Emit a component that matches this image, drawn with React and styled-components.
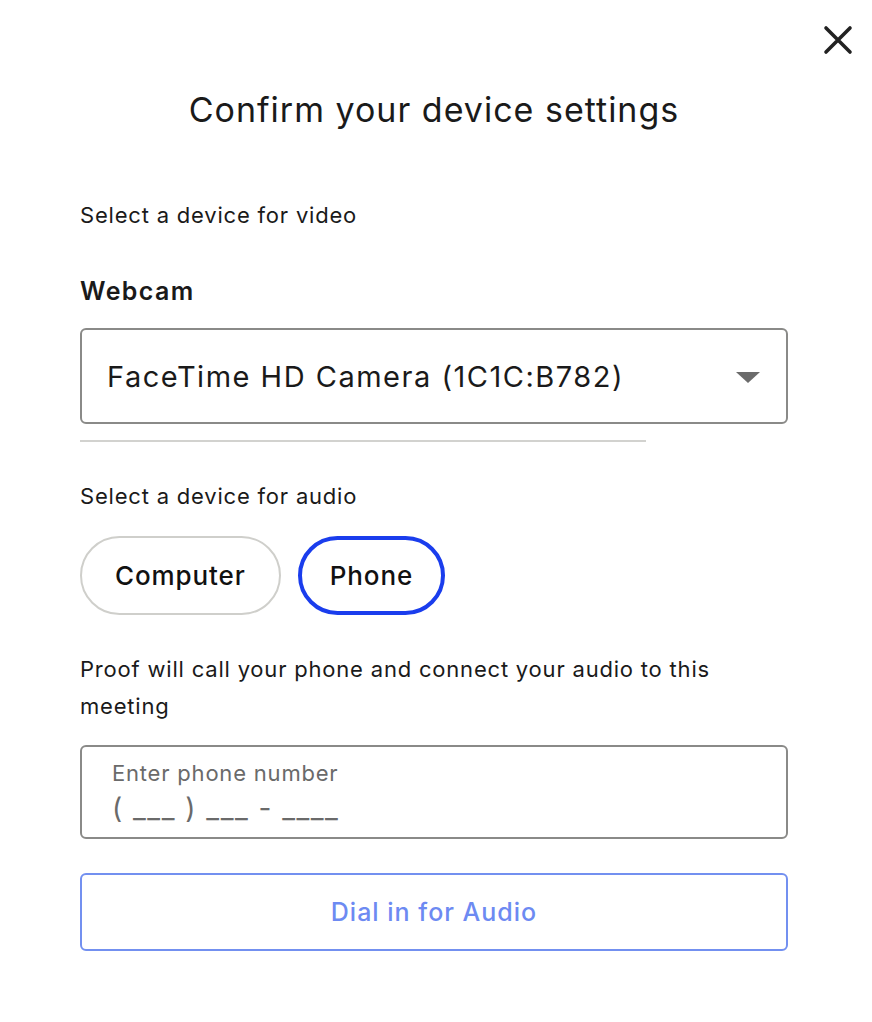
import React, { useState } from 'react';
import styled, { createGlobalStyle } from 'styled-components';

const GlobalStyle = createGlobalStyle`
  body {
    margin: 0;
    background: #fff;
    font-family: Inter, "Noto Sans", sans-serif;
    color: #1a1a1a;
  }
`;

const Modal = styled.div`
  position: relative;
  width: 872px;
  min-height: 1022px;
  box-sizing: border-box;
  padding: 88px 84px 0 80px;
`;

const CloseButton = styled.button`
  position: absolute;
  top: 22px;
  right: 16px;
  width: 36px;
  height: 36px;
  padding: 0;
  border: none;
  background: none;
  display: flex;
  align-items: center;
  justify-content: center;
  cursor: pointer;
`;

const Title = styled.h1`
  margin: 0;
  text-align: center;
  font-size: 34px;
  font-weight: 400;
  letter-spacing: 1px;
  line-height: 44px;
  color: #1a1a1a;
`;

const Hint = styled.p`
  margin: ${(p) => p.$top || 0}px 0 0;
  font-size: 22px;
  letter-spacing: 0.8px;
  line-height: 37px;
  color: #1a1a1a;
`;

const FieldLabel = styled.div`
  margin-top: 42px;
  font-size: 25px;
  font-weight: 600;
  letter-spacing: 1.4px;
  line-height: 30px;
`;

const SelectBox = styled.div`
  margin-top: 22px;
  height: 96px;
  box-sizing: border-box;
  border: 2px solid #8a8a88;
  border-radius: 6px;
  display: flex;
  align-items: center;
  justify-content: space-between;
  padding: 0 26px 0 25px;
  font-size: 29px;
  letter-spacing: 1.5px;
  color: #1a1a1a;
`;

const Caret = styled.span`
  width: 0;
  height: 0;
  border-left: 12px solid transparent;
  border-right: 12px solid transparent;
  border-top: 11px solid #6b6b6b;
  margin-top: 2px;
`;

const Divider = styled.hr`
  margin: 16px 0 0;
  width: 566px;
  border: none;
  border-top: 2px solid #d2d2cf;
`;

const PillRow = styled.div`
  margin-top: 21px;
  display: flex;
  gap: 17px;
`;

const Pill = styled.button`
  height: 79px;
  box-sizing: border-box;
  padding: 0 ${(p) => (p.$active ? 28 : 33)}px;
  border-radius: 40px;
  border: ${(p) => (p.$active ? '4px solid #1a3ded' : '2px solid #cfcfcb')};
  background: #fff;
  font-family: inherit;
  font-size: 26px;
  font-weight: 500;
  letter-spacing: 0.9px;
  color: #111;
  cursor: pointer;
`;

const PhoneField = styled.div`
  margin-top: 20px;
  height: 94px;
  box-sizing: border-box;
  border: 2px solid #8a8a88;
  border-radius: 6px;
  padding: 10px 30px 0;
  display: flex;
  flex-direction: column;
`;

const PhoneLabel = styled.span`
  font-size: 22px;
  letter-spacing: 0.8px;
  line-height: 32px;
  color: #6a6a6a;
`;

const PhoneMask = styled.span`
  font-size: 28px;
  line-height: 38px;
  color: #6a6a6a;
  letter-spacing: 1.5px;
  white-space: pre;
`;

const DialButton = styled.button`
  margin-top: 34px;
  width: 100%;
  height: 78px;
  border: 2px solid #7390f0;
  border-radius: 6px;
  background: #fff;
  font-family: inherit;
  font-size: 25px;
  font-weight: 500;
  letter-spacing: 1px;
  color: #6d8af2;
  cursor: pointer;
`;

const App = () => {
  const [audio, setAudio] = useState('phone');

  return (
    <>
      <GlobalStyle />
      <Modal>
        <CloseButton aria-label="Close">
          <svg width="30" height="30" viewBox="0 0 30 30">
            <path d="M3 3 L27 27 M27 3 L3 27" stroke="#222" strokeWidth="3.6" strokeLinecap="round" />
          </svg>
        </CloseButton>
        <Title>Confirm your device settings</Title>

        <Hint $top={65}>Select a device for video</Hint>
        <FieldLabel>Webcam</FieldLabel>
        <SelectBox>
          <span>FaceTime HD Camera (1C1C:B782)</span>
          <Caret />
        </SelectBox>
        <Divider />

        <Hint $top={36}>Select a device for audio</Hint>
        <PillRow>
          <Pill $active={audio === 'computer'} onClick={() => setAudio('computer')}>
            Computer
          </Pill>
          <Pill $active={audio === 'phone'} onClick={() => setAudio('phone')}>
            Phone
          </Pill>
        </PillRow>

        <Hint $top={36}>Proof will call your phone and connect your audio to this meeting</Hint>
        <PhoneField>
          <PhoneLabel>Enter phone number</PhoneLabel>
          <PhoneMask>( ___ ) ___ - ____</PhoneMask>
        </PhoneField>

        <DialButton>Dial in for Audio</DialButton>
      </Modal>
    </>
  );
};

export default App;
